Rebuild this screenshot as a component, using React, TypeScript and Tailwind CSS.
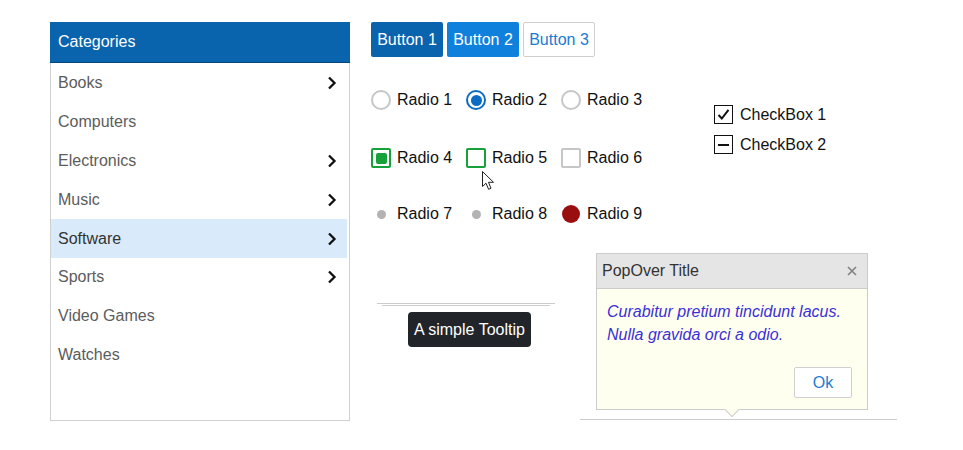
import { ReactNode } from "react";

const categories = [
  { name: "Books", sub: true },
  { name: "Computers", sub: false },
  { name: "Electronics", sub: true },
  { name: "Music", sub: true },
  { name: "Software", sub: true, active: true },
  { name: "Sports", sub: true },
  { name: "Video Games", sub: false },
  { name: "Watches", sub: false },
];

function Chevron() {
  return (
    <svg width="10" height="14" viewBox="0 0 10 14" className="shrink-0">
      <path d="M2 1.5 7.5 7 2 12.5" fill="none" stroke="#111" strokeWidth="2.3" />
    </svg>
  );
}

function Option({ mark, label }: Readonly<{ mark: ReactNode; label: string }>) {
  return (
    <div className="flex items-center h-5">
      <div className="w-5 h-5 flex items-center justify-center shrink-0">{mark}</div>
      <span className="ml-[6px] text-[16px] text-[#111] leading-none">{label}</span>
    </div>
  );
}

export default function App() {
  return (
    <div className="relative w-[963px] h-[450px] bg-white font-['Liberation_Sans',Arial,sans-serif] flex pl-[50px] pt-[22px]">
      {/* category list */}
      <div className="w-[300px] h-[399px] border border-[#d0d0d0] border-t-0 flex flex-col">
        <div className="h-[41px] bg-[#0a63ad] border-b border-[#05467d] text-white text-[16px] flex items-center pl-[8px] -mx-px">
          Categories
        </div>
        <div className="pt-[1px] flex flex-col">
          {categories.map((c) => (
            <div
              key={c.name}
              className={`h-[38.8px] mr-[2px] flex items-center justify-between pl-[7px] pr-[10px] text-[16px] ${
                c.active ? "bg-[#d9ebfa] text-[#333]" : "text-[#5c5c5c]"
              }`}
            >
              <span>{c.name}</span>
              {c.sub && <Chevron />}
            </div>
          ))}
        </div>
      </div>

      <div className="ml-[21px] flex flex-col">
        {/* buttons */}
        <div className="flex gap-[4px]">
          <button className="h-[35px] w-[72px] rounded-[2px] bg-[#0a63ad] text-white text-[16px]">Button 1</button>
          <button className="h-[35px] w-[72px] rounded-[2px] bg-[#0f80dc] text-white text-[16px]">Button 2</button>
          <button className="h-[35px] w-[72px] rounded-[2px] bg-white border border-[#cfcfcf] text-[#1c7bd2] text-[16px]">Button 3</button>
        </div>

        {/* radios and checkboxes */}
        <div className="flex mt-[33px]">
          <div className="grid grid-cols-[95px_95px_95px] gap-y-[38px] [&>*:nth-child(n+7)]:-mt-[2px]">
            <Option label="Radio 1" mark={<div className="w-[20px] h-[20px] rounded-full border-2 border-[#c6c6c6]" />} />
            <Option
              label="Radio 2"
              mark={
                <div className="w-[20px] h-[20px] rounded-full border-2 border-[#0b6cc4] flex items-center justify-center">
                  <div className="w-[11px] h-[11px] rounded-full bg-[#0b6cc4]" />
                </div>
              }
            />
            <Option label="Radio 3" mark={<div className="w-[20px] h-[20px] rounded-full border-2 border-[#c6c6c6]" />} />
            <Option
              label="Radio 4"
              mark={
                <div className="w-[20px] h-[20px] rounded-[2px] border-2 border-[#17a13a] flex items-center justify-center">
                  <div className="w-[11px] h-[11px] rounded-[2px] bg-[#17a13a]" />
                </div>
              }
            />
            <Option label="Radio 5" mark={<div className="w-[20px] h-[20px] rounded-[2px] border-2 border-[#17a13a]" />} />
            <Option label="Radio 6" mark={<div className="w-[20px] h-[20px] rounded-[2px] border-2 border-[#c6c6c6]" />} />
            <Option label="Radio 7" mark={<div className="w-[9px] h-[9px] rounded-full bg-[#b3b3b3]" />} />
            <Option label="Radio 8" mark={<div className="w-[9px] h-[9px] rounded-full bg-[#b3b3b3]" />} />
            <Option label="Radio 9" mark={<div className="w-[18px] h-[18px] rounded-full bg-[#990e0e]" />} />
          </div>

          <div className="ml-[58px] mt-[15px] flex flex-col gap-[11px]">
            <div className="flex items-center">
              <div className="w-[19px] h-[19px] border-[1.5px] border-[#111] flex items-center justify-center">
                <svg width="13" height="13" viewBox="0 0 13 13">
                  <path d="M1.5 7 4.8 10.5 11.5 1.8" fill="none" stroke="#111" strokeWidth="2" />
                </svg>
              </div>
              <span className="ml-[7px] text-[16px] text-[#111] leading-none">CheckBox 1</span>
            </div>
            <div className="flex items-center">
              <div className="w-[19px] h-[19px] border-[1.5px] border-[#111] flex items-center justify-center">
                <div className="w-[11px] h-[2px] bg-[#111]" />
              </div>
              <span className="ml-[7px] text-[16px] text-[#111] leading-none">CheckBox 2</span>
            </div>
          </div>
        </div>

        {/* tooltip and popover */}
        <div className="flex mt-[29px]">
          <div className="ml-[6px] w-[178px] mt-[50px] flex flex-col">
            <div className="h-px bg-[#cccccc]" />
            <div className="h-px bg-[#cccccc] mx-[5px] mt-[1px]" />
            <div className="mt-[6px] ml-[31px] self-start h-[35px] px-[6px] rounded-[4px] bg-[#212529] text-white text-[16px] flex items-center">
              A simple Tooltip
            </div>
          </div>

          <div className="ml-[25px] w-[317px] flex flex-col">
            <div className="relative ml-[16px] w-[272px] border border-[#cccccc] bg-[#fffff0]">
              <div className="h-[35px] bg-[#e5e5e5] border-b border-[#cccccc] flex items-center justify-between pl-[5px] pr-[10px]">
                <span className="text-[16px] text-[#333]">PopOver Title</span>
                <svg width="10" height="10" viewBox="0 0 10 10">
                  <path d="M1 1 9 9M9 1 1 9" stroke="#808080" strokeWidth="1.6" />
                </svg>
              </div>
              <div className="px-[10px] pt-[11px] italic text-[16px] leading-[23px] text-[#3b2fd8]">
                <div>Curabitur pretium tincidunt lacus.</div>
                <div>Nulla gravida orci a odio.</div>
              </div>
              <div className="flex justify-end pr-[15px] pt-[21px] pb-[11px]">
                <button className="w-[58px] h-[31px] bg-white border border-[#cfcfcf] rounded-[2px] text-[16px] text-[#1c7bd2]">
                  Ok
                </button>
              </div>
              <div className="absolute left-1/2 -translate-x-1/2 -bottom-[6px] w-[11px] h-[11px] rotate-45 bg-[#fffff0] border-r border-b border-[#cccccc]" />
            </div>
            <div className="h-px bg-[#cccccc] mt-[9px]" />
          </div>
        </div>
      </div>

      {/* mouse pointer */}
      <svg className="absolute left-[482px] top-[171px]" width="13" height="20" viewBox="0 0 13 20">
        <path d="M0.5 0.5V15.5L4 12.2 6.6 18.3 9 17.2 6.5 11.3H11.5Z" fill="white" stroke="#222" strokeWidth="1" strokeLinejoin="round" />
      </svg>
    </div>
  );
}
